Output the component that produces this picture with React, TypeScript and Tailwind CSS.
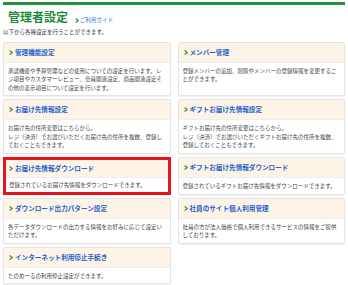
import React from "react";

type Card = { title: string; body: string; highlight?: boolean };

const cards: Card[] = [
  { title: "管理機能設定", body: "承認機能や予算管理などの使用についての設定を行います。レジ項目やカスタマーレビュー、会員関連設定、商品関連設定その他の表示項目について設定を行います。" },
  { title: "メンバー管理", body: "登録メンバーの追加、削除やメンバーの登録情報を変更することができます。" },
  { title: "お届け先情報設定", body: "お届け先の住所変更はこちらから。\nレジ（決済）でお選びいただくお届け先の住所を複数、登録しておくこともできます。" },
  { title: "ギフトお届け先情報設定", body: "ギフトお届け先の住所変更はこちらから。\nレジ（決済）でお選びいただくギフトお届け先の住所を複数、登録しておくこともできます。" },
  { title: "お届け先情報ダウンロード", body: "登録されているお届け先情報をダウンロードできます。", highlight: true },
  { title: "ギフトお届け先情報ダウンロード", body: "登録されているギフトお届け先情報をダウンロードできます。" },
  { title: "ダウンロード出力パターン設定", body: "各データダウンロードの出力する情報をお好みに応じて設定いただけます。" },
  { title: "社員のサイト個人利用管理", body: "社員の方が法人価格で個人利用できるサービスの情報をご提供しております。" },
  { title: "インターネット利用停止手続き", body: "たのめーるの利用停止設定ができます。" },
];

function Arrow() {
  return (
    <svg width="4" height="5" viewBox="0 0 4 5" className="shrink-0">
      <path d="M0.6 0.5 L3.2 2.5 L0.6 4.5" fill="none" stroke="#3a9a3a" strokeWidth="1.2" />
    </svg>
  );
}

function CardBox({ c }: { c: Card }) {
  return (
    <div
      className={
        "flex flex-col bg-white " +
        (c.highlight
          ? "border-[3px] border-[#e8141c]"
          : "border border-[#e4e4e4] shadow-[0_1px_1px_rgba(0,0,0,0.06)] rounded-[2px]")
      }
    >
      <div
        className={
          "flex items-center gap-[2px] bg-[#fdf3e7] border-b border-[#eeeeee] " +
          (c.highlight ? "h-[18px] px-[3px]" : "h-[20px] px-[5px]")
        }
      >
        <Arrow />
        <span className="text-[6.6px] font-bold text-[#2463c8] leading-none">{c.title}</span>
      </div>
      <div
        className={
          "text-[5.5px] leading-[8.6px] text-[#444] whitespace-pre-line " +
          (c.highlight ? "px-[3px] pt-[3px] pb-[2px]" : "px-[4px] pt-[4px] pb-[3px]")
        }
      >
        {c.body}
      </div>
    </div>
  );
}

export default function App() {
  return (
    <div
      className="w-[348px] h-[285px] bg-white overflow-hidden px-[3px] pt-[2px]"
      style={{ fontFamily: '"Noto Sans CJK JP", "Noto Sans", sans-serif' }}
    >
      <div className="h-[3px] bg-[#23913a]" />
      <div className="flex items-end pl-[5px] pt-[5px] gap-[7px]">
        <span className="text-[12px] font-bold text-[#1f8a3a] leading-[14px]">管理者設定</span>
        <span className="flex items-center gap-[1px] pb-[1px]">
          <Arrow />
          <span className="text-[5.5px] text-[#3a78d8] leading-none">ご利用ガイド</span>
        </span>
      </div>
      <div className="text-[5.5px] text-[#333] leading-none mt-[6px]">以下から各種設定を行うことができます。</div>
      <div className="grid grid-cols-2 gap-x-[7px] gap-y-[3px] mt-[6px] items-stretch">
        {cards.map((c, i) => (
          <CardBox key={i} c={c} />
        ))}
      </div>
    </div>
  );
}
